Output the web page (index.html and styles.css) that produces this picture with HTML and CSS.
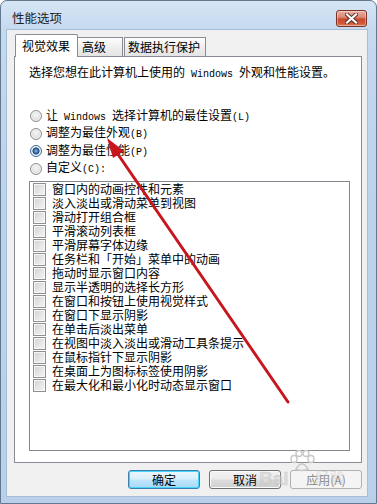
FILE: index.html
```html
<!DOCTYPE html>
<html lang="zh-CN">
<head>
<meta charset="utf-8">
<title>性能选项</title>
<link rel="stylesheet" href="styles.css">
</head>
<body>
<div class="window">
  <div class="titlebar">
    <span class="title">性能选项</span>
    <div class="close">
      <svg width="13" height="11" viewBox="0 0 13 11"><path d="M2 1.5 L11 9.5 M11 1.5 L2 9.5" stroke="#5a2a20" stroke-width="4" stroke-linecap="square"/><path d="M2 1.5 L11 9.5 M11 1.5 L2 9.5" stroke="#ffffff" stroke-width="2.2" stroke-linecap="square"/></svg>
    </div>
  </div>
  <div class="client">
    <div class="tabs">
      <div class="tab active">视觉效果</div>
      <div class="tab t2">高级</div>
      <div class="tab t3">数据执行保护</div>
    </div>
    <div class="panel">
      <p class="desc">选择您想在此计算机上使用的<span class="lat"> Windows </span>外观和性能设置。</p>
      <div class="radios">
        <div class="radio-row"><span class="radio"></span><span class="rlabel">让<span class="lat"> Windows </span>选择计算机的最佳设置<span class="lat">(L)</span></span></div>
        <div class="radio-row"><span class="radio"></span><span class="rlabel">调整为最佳外观<span class="lat">(B)</span></span></div>
        <div class="radio-row"><span class="radio on"></span><span class="rlabel">调整为最佳性能<span class="lat">(P)</span></span></div>
        <div class="radio-row"><span class="radio"></span><span class="rlabel">自定义<span class="lat">(C):</span></span></div>
      </div>
      <div class="listbox">
        <div class="item"><span class="check"></span>窗口内的动画控件和元素</div>
        <div class="item"><span class="check"></span>淡入淡出或滑动菜单到视图</div>
        <div class="item"><span class="check"></span>滑动打开组合框</div>
        <div class="item"><span class="check"></span>平滑滚动列表框</div>
        <div class="item"><span class="check"></span>平滑屏幕字体边缘</div>
        <div class="item"><span class="check"></span>任务栏和「开始」菜单中的动画</div>
        <div class="item"><span class="check"></span>拖动时显示窗口内容</div>
        <div class="item"><span class="check"></span>显示半透明的选择长方形</div>
        <div class="item"><span class="check"></span>在窗口和按钮上使用视觉样式</div>
        <div class="item"><span class="check"></span>在窗口下显示阴影</div>
        <div class="item"><span class="check"></span>在单击后淡出菜单</div>
        <div class="item"><span class="check"></span>在视图中淡入淡出或滑动工具条提示</div>
        <div class="item"><span class="check"></span>在鼠标指针下显示阴影</div>
        <div class="item"><span class="check"></span>在桌面上为图标标签使用阴影</div>
        <div class="item"><span class="check"></span>在最大化和最小化时动态显示窗口</div>
      </div>
    </div>
    <div class="buttons">
      <div class="btn default">确定</div>
      <div class="btn">取消</div>
      <div class="btn disabled">应用(A)</div>
    </div>
  </div>
  <div class="watermark">
    <svg class="paw" width="26" height="22" viewBox="0 0 26 22"><g fill="none" stroke="#c9c9c9" stroke-width="1.5"><ellipse cx="5" cy="9" rx="3" ry="3.5"/><ellipse cx="10" cy="3.5" rx="3" ry="3"/><ellipse cx="17" cy="3.5" rx="3" ry="3"/><ellipse cx="22" cy="9" rx="3" ry="3.5"/><path d="M7 19 Q13 9 19 19 Q13 22 7 19 Z"/></g></svg>
    <span class="wm-bai">Bai</span><span class="wm-jy">经验</span>
  </div>
  <svg class="arrow" width="377" height="504" viewBox="0 0 377 504">
    <line x1="288" y1="402" x2="115" y2="150" stroke="#c8161d" stroke-width="3" stroke-linecap="round"/>
    <polygon points="107,138 124,151 113,158" fill="#c8161d"/>
  </svg>
</div>
</body>
</html>
```

FILE: styles.css
```css
html, body {
  margin: 0;
  padding: 0;
}
body {
  width: 377px;
  height: 504px;
  overflow: hidden;
  font-family: "Noto Sans CJK SC", "Noto Sans", sans-serif;
  font-size: 12px;
  color: #000;
  background: #ffffff;
}
.window {
  position: relative;
  width: 377px;
  height: 504px;
  box-sizing: border-box;
  border: 1px solid #62788f;
  border-radius: 7px 7px 0 0;
  background: linear-gradient(to bottom, #d6e5f5 0px, #c5d9ef 30px, #bcd3ec 200px, #b8d0ea 504px);
  padding: 0 9px 0 6px;
  display: flex;
  flex-direction: column;
}
.titlebar {
  height: 29px;
  display: flex;
  justify-content: space-between;
  align-items: flex-start;
  padding-left: 5px;
}
.title {
  margin-top: 9px;
  line-height: 16px;
  font-size: 12.5px;
  color: #1e1e1e;
}
.close {
  margin-top: 9px;
  width: 31px;
  height: 17px;
  box-sizing: border-box;
  border: 1px solid #7b3326;
  border-radius: 3px;
  background: linear-gradient(to bottom, #eab1a4 0%, #dc8b78 40%, #c64a32 55%, #cf5a3e 85%, #e08466 100%);
  display: flex;
  align-items: center;
  justify-content: center;
  box-shadow: inset 0 0 0 1px rgba(255,255,255,0.35);
}
.client {
  width: 360px;
  height: 466px;
  background: #f0f0f0;
  box-shadow: 0 0 0 1px #a8bdd6;
  display: flex;
  flex-direction: column;
  padding: 4px 5px 0 7px;
  box-sizing: border-box;
}
.tabs {
  display: flex;
  align-items: flex-end;
  height: 22px;
  padding-left: 1px;
  position: relative;
  z-index: 2;
}
.tab {
  box-sizing: border-box;
  height: 19px;
  border: 1px solid #898c95;
  border-bottom: none;
  background: linear-gradient(to bottom, #fdfdfd, #ececec 60%, #e4e4e4);
  line-height: 17px;
  font-size: 12px;
  padding-left: 4px;
  white-space: nowrap;
}
.tab.active {
  height: 23px;
  width: 63px;
  background: #ffffff;
  margin-bottom: -1px;
  padding-left: 6px;
  line-height: 22px;
  border-radius: 2px 2px 0 0;
}
.tab.t2 {
  width: 46px;
  margin-left: -1px;
}
.tab.t3 {
  width: 82px;
  margin-left: 1px;
  padding-left: 3px;
}
.panel {
  box-sizing: border-box;
  width: 348px;
  height: 407px;
  border: 1px solid #898c95;
  background: #ffffff;
  padding: 7px 0 0 14px;
  position: relative;
  z-index: 1;
}
.desc {
  margin: 0;
  line-height: 16px;
  font-size: 12px;
  white-space: nowrap;
}
.lat {
  font-family: "Liberation Mono", monospace;
  font-size: 10px;
}
.radios {
  margin-top: 24.5px;
  display: flex;
  flex-direction: column;
}
.radio-row {
  height: 17.5px;
  display: flex;
  align-items: center;
  white-space: nowrap;
}
.radio {
  width: 12px;
  height: 12px;
  box-sizing: border-box;
  margin-left: 1px;
  border-radius: 50%;
  border: 1px solid #8f8f8f;
  background: radial-gradient(circle at 50% 40%, #f6f6f6 0%, #e2e2e2 55%, #cfcfcf 100%);
  box-shadow: inset 0 0 0 1px #f4f4f4;
  position: relative;
}
.radio.on {
  background: radial-gradient(circle at 50% 50%, #8fc1ec 0%, #2d6fad 30%, #1c3f73 45%, #e8e8e8 55%, #d5d5d5 100%);
  border-color: #3b6a9e;
}
.rlabel {
  margin-left: 4px;
  line-height: 16px;
}
.listbox {
  margin-top: 3.5px;
  box-sizing: border-box;
  width: 321px;
  height: 270px;
  border: 1px solid #828790;
  background: #fff;
  display: flex;
  flex-direction: column;
}
.item {
  height: 14px;
  line-height: 14px;
  display: flex;
  align-items: center;
  white-space: nowrap;
  font-size: 12px;
}
.check {
  width: 13px;
  height: 13px;
  box-sizing: border-box;
  margin-left: 3px;
  margin-right: 6px;
  border: 1px solid #8e8f8f;
  background: linear-gradient(135deg, #d2d2d2 0%, #e4e4e4 50%, #f6f6f6 100%);
  box-shadow: inset 0 0 0 1px #f7f7f7;
}
.buttons {
  margin-top: 7px;
  display: flex;
  justify-content: flex-end;
  gap: 9px;
}
.btn {
  width: 72px;
  height: 19px;
  box-sizing: border-box;
  border: 1px solid #707070;
  border-radius: 3px;
  background: linear-gradient(to bottom, #f2f2f2 0%, #ebebeb 48%, #dddddd 52%, #cfcfcf 100%);
  box-shadow: inset 0 0 0 1px #fbfbfb;
  text-align: center;
  line-height: 17px;
  font-size: 12px;
}
.btn.default {
  border-color: #3c7fb1;
  background: linear-gradient(to bottom, #eaf6fd 0%, #d9f0fc 48%, #bee6fd 52%, #a7d9f5 100%);
  box-shadow: inset 0 0 0 1px #48d4f6;
}
.btn.disabled {
  border-color: #adb2b5;
  background: #f4f4f4;
  color: #838383;
  box-shadow: none;
}
.watermark {
  position: absolute;
  left: 258px;
  top: 449px;
  width: 92px;
  height: 44px;
  pointer-events: none;
  z-index: 5;
}
.paw {
  position: absolute;
  left: 30px;
  top: 0;
}
.wm-bai {
  position: absolute;
  left: 0;
  top: 18px;
  font-family: "Liberation Sans", sans-serif;
  font-size: 19px;
  font-weight: bold;
  color: rgba(205,205,205,0.6);
  -webkit-text-stroke: 0.5px rgba(190,190,190,0.6);
}
.wm-jy {
  position: absolute;
  left: 56px;
  top: 16px;
  font-size: 15px;
  color: rgba(205,205,205,0.6);
}
.arrow {
  position: absolute;
  left: -1px;
  top: -1px;
  pointer-events: none;
  z-index: 6;
}
```
